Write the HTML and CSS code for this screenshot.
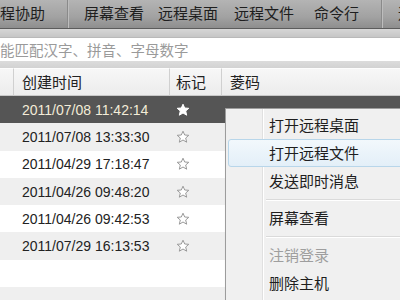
FILE: index.html
```html
<!DOCTYPE html>
<html>
<head>
<meta charset="utf-8">
<link rel="stylesheet" href="styles.css">
</head>
<body>
<div class="app">
  <div class="toolbar">
    <span class="tb first">远程协助</span>
    <span class="tsep"></span>
    <span class="tb">屏幕查看</span>
    <span class="tb">远程桌面</span>
    <span class="tb">远程文件</span>
    <span class="tb">命令行</span>
    <span class="tsep"></span>
    <span class="tb">远程</span>
  </div>
  <div class="band"></div>
  <div class="search"><span class="ph">能匹配汉字、拼音、字母数字</span></div>
  <div class="band2"></div>
  <div class="grid">
    <div class="hd c0"></div>
    <div class="hd c1">创建时间</div>
    <div class="hd c2">标记</div>
    <div class="hd c3">菱码</div>

    <div class="row sel"><span class="c0"></span><span class="c1">2011/07/08 11:42:14</span><span class="c2"><svg class="star" viewBox="0 0 14 14"><path d="M7 1.2 8.7 5 12.8 5.3 9.7 8 10.7 12.2 7 10 3.3 12.2 4.3 8 1.2 5.3 5.3 5Z"/></svg></span><span class="c3 code">1640-0720-0176-0137-5540</span></div>
    <div class="row alt"><span class="c0"></span><span class="c1">2011/07/08 13:33:30</span><span class="c2"><svg class="star" viewBox="0 0 14 14"><path d="M7 1.2 8.7 5 12.8 5.3 9.7 8 10.7 12.2 7 10 3.3 12.2 4.3 8 1.2 5.3 5.3 5Z"/></svg></span><span class="c3"></span></div>
    <div class="row"><span class="c0"></span><span class="c1">2011/04/29 17:18:47</span><span class="c2"><svg class="star" viewBox="0 0 14 14"><path d="M7 1.2 8.7 5 12.8 5.3 9.7 8 10.7 12.2 7 10 3.3 12.2 4.3 8 1.2 5.3 5.3 5Z"/></svg></span><span class="c3"></span></div>
    <div class="row alt"><span class="c0"></span><span class="c1">2011/04/26 09:48:20</span><span class="c2"><svg class="star" viewBox="0 0 14 14"><path d="M7 1.2 8.7 5 12.8 5.3 9.7 8 10.7 12.2 7 10 3.3 12.2 4.3 8 1.2 5.3 5.3 5Z"/></svg></span><span class="c3"></span></div>
    <div class="row"><span class="c0"></span><span class="c1">2011/04/26 09:42:53</span><span class="c2"><svg class="star" viewBox="0 0 14 14"><path d="M7 1.2 8.7 5 12.8 5.3 9.7 8 10.7 12.2 7 10 3.3 12.2 4.3 8 1.2 5.3 5.3 5Z"/></svg></span><span class="c3"></span></div>
    <div class="row alt"><span class="c0"></span><span class="c1">2011/07/29 16:13:53</span><span class="c2"><svg class="star" viewBox="0 0 14 14"><path d="M7 1.2 8.7 5 12.8 5.3 9.7 8 10.7 12.2 7 10 3.3 12.2 4.3 8 1.2 5.3 5.3 5Z"/></svg></span><span class="c3"></span></div>
    <div class="row"><span class="c0"></span><span class="c1"></span><span class="c2"></span><span class="c3"></span></div>
    <div class="row alt"><span class="c0"></span><span class="c1"></span><span class="c2"></span><span class="c3"></span></div>
  </div>

  <div class="menu">
    <div class="mi">打开远程桌面</div>
    <div class="mi hot">打开远程文件</div>
    <div class="mi">发送即时消息</div>
    <div class="msep"></div>
    <div class="mi">屏幕查看</div>
    <div class="msep"></div>
    <div class="mi dis">注销登录</div>
    <div class="mi">删除主机</div>
  </div>
</div>
</body>
</html>
```

FILE: styles.css
```css
* { box-sizing: border-box; }
html, body { margin: 0; padding: 0; }
body {
  width: 400px;
  height: 300px;
  overflow: hidden;
  font-family: "Liberation Sans", "Noto Sans CJK SC", sans-serif;
  font-size: 14px;
  color: #222;
  background: #fff;
}
.app { position: relative; width: 400px; height: 300px; overflow: hidden; }

.toolbar {
  height: 29px;
  display: flex;
  align-items: center;
  white-space: nowrap;
  background: linear-gradient(#b4b4b4, #a2a2a2 60%, #8e8e8e);
  border-bottom: 1px solid #5c5c5c;
  font-size: 15px;
  color: #1e1e1e;
  overflow: hidden;
}
.tb { margin-left: 14px; flex: none; line-height: 28px; }
.tb.first { margin-left: -15px; }
.tsep {
  flex: none;
  width: 1px;
  height: 28px;
  margin-left: 22px;
  margin-right: 2px;
  background: #8a8a8a;
  box-shadow: 1px 0 0 #bdbdbd;
}
.toolbar .tsep + .tb { margin-left: 14px; }
.toolbar .tb:nth-child(5) { margin-left: 16px; }
.toolbar .tb:nth-child(6) { margin-left: 20px; }

.band {
  height: 8px;
  background: linear-gradient(#d6d6d6, #c6c6c6);
}
.search {
  height: 24px;
  background: #fff;
  border-top: 1px solid #b9b9b9;
  display: flex;
  align-items: center;
  white-space: nowrap;
  overflow: hidden;
}
.ph { color: #9a9a9a; font-size: 14.5px; }
.band2 {
  height: 7px;
  background: linear-gradient(#dcdcdc, #d2d2d2);
}

.grid {
  display: grid;
  grid-template-columns: 14px 156px 52px 1fr;
}
.hd {
  height: 28px;
  line-height: 27px;
  background: linear-gradient(#f7f7f7, #ececec);
  border-right: 1px solid #d0d0d0;
  border-bottom: 1px solid #c8c8c8;
  border-top: 1px solid #fdfdfd;
  font-size: 15px;
  color: #222;
  white-space: nowrap;
}
.hd.c1 { padding-left: 8px; }
.hd.c2 { padding-left: 6px; }
.hd.c3 { padding-left: 8px; border-right: 0; }

.row { display: contents; }
.row > span {
  height: 27.3px;
  display: flex;
  align-items: center;
  white-space: nowrap;
  background: #fff;
  font-size: 14px;
}
.row.alt > span { background: #efefef; }
.row.sel > span { background: #555555; color: #f3ecd8; }
.row > .c1 { padding-left: 8px; }
.row > .c2 { padding-left: 6px; }
.row > .c3 { padding-left: 6px; overflow: hidden; }
.code { color: #cfcfcf; align-items: flex-end !important; line-height: 1; padding-top: 6px; }

.star {
  width: 14px;
  height: 14px;
  fill: #fff;
  stroke: #9a9a9a;
  stroke-width: 1;
  stroke-linejoin: round;
}
.sel .star { fill: #fff; stroke: #fff; }

.menu {
  position: absolute;
  left: 225px;
  top: 108px;
  width: 200px;
  height: 210px;
  background: #f0f0f0;
  border: 1px solid #9c9c9c;
  box-shadow: 2px 2px 3px rgba(0,0,0,0.25);
  padding: 2px 0 0 2px;
}
.menu::before {
  content: "";
  position: absolute;
  left: 36px;
  top: 0;
  bottom: 0;
  width: 1px;
  background: #e0e0e0;
  box-shadow: 1px 0 0 #fff;
}
.mi {
  position: relative;
  height: 28px;
  line-height: 28px;
  padding-left: 40px;
  font-size: 15px;
  color: #1e1e1e;
  white-space: nowrap;
  border: 1px solid transparent;
  border-radius: 3px;
}
.mi.hot {
  background: linear-gradient(#f2f8fc, #e3eff8);
  border-color: #b8d6ea;
}
.mi.dis { color: #9e9e9e; }
.msep {
  position: relative;
  height: 1px;
  margin: 4px 0 4px 38px;
  background: #dadada;
  box-shadow: 0 1px 0 #fff;
}
```
